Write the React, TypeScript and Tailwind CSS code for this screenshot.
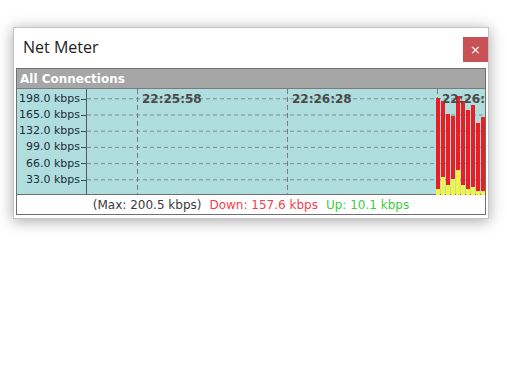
import React from "react";

const yLabels = ["198.0 kbps", "165.0 kbps", "132.0 kbps", "99.0 kbps", "66.0 kbps", "33.0 kbps"];
const gridY = [9.8, 26, 42.2, 58.4, 74.6, 90.8];
const times = [
  { x: 50, label: "22:25:58" },
  { x: 200, label: "22:26:28" },
  { x: 350, label: "22:26:58" },
];
// [down top, up top] in plot coordinates (bottom = 106)
const bars = [
  [9, 100],
  [12, 88],
  [25, 96],
  [27, 90],
  [7, 81],
  [12, 96],
  [21, 100],
  [16, 98],
  [34, 102],
  [28, 102],
];

const Plot = () => (
  <svg width="398" height="106" className="block">
    {gridY.map((y) => (
      <line key={y} x1="0" x2="398" y1={y} y2={y} stroke="#7d8f92" strokeDasharray="4 3" strokeWidth="1" />
    ))}
    {times.map((t) => (
      <line key={t.x} x1={t.x + 0.5} x2={t.x + 0.5} y1="0" y2="106" stroke="#6f7f82" strokeDasharray="5 3" strokeWidth="1" />
    ))}
    {bars.map(([down, up], i) => (
      <g key={i}>
        <rect x={349 + i * 5} y={down} width="4" height={106 - down} fill="#ea1f26" />
        <rect x={349 + i * 5} y={up} width="4" height={106 - up} fill="#f4f43c" />
      </g>
    ))}
    {times.map((t) => (
      <text
        key={t.label}
        x={t.x + 5}
        y="14"
        fill="#4a4a4a"
        fontFamily="'DejaVu Sans', sans-serif"
        fontWeight="bold"
        fontSize="12"
      >
        {t.label}
      </text>
    ))}
  </svg>
);

export default function App() {
  return (
    <div className="w-full h-[371px] bg-white pt-[27px] pl-[13px]">
      <div className="w-[476px] h-[192px] bg-white border border-[#c4c4c4] shadow-[0_2px_14px_rgba(0,0,0,0.35)] flex flex-col">
        {/* Title bar */}
        <div className="h-[40px] flex items-start justify-between">
          <div className="pl-[9px] pt-[7px] text-[16px] text-[#222] font-['Open_Sans',sans-serif]">Net Meter</div>
          <button className="mt-[9px] w-[25px] h-[25px] bg-[#c75155] text-white flex items-center justify-center text-[13px] leading-none font-['DejaVu_Sans',sans-serif]">
            ×
          </button>
        </div>

        {/* Panel */}
        <div className="mx-[2px] border border-[#6f6f6f] flex flex-col font-['DejaVu_Sans',sans-serif]">
          <div className="h-[20px] bg-[#a6a6a6] border-b border-[#7a7a7a] flex items-center pl-[3px] text-white font-bold text-[12px]">
            All Connections
          </div>
          <div className="h-[106px] bg-[#b0dedf] flex border-b border-[#707070]">
            <div className="w-[70px] border-r border-[#4f5f60] pt-[2px] flex flex-col">
              {yLabels.map((l) => (
                <div key={l} className="h-[16.2px] flex items-center justify-end text-[11px] text-[#1d2d3a]">
                  <span>{l}</span>
                  <span className="w-[5px] h-px bg-[#3d4d50] ml-[1px]" />
                </div>
              ))}
            </div>
            <Plot />
          </div>
          <div className="h-[19px] bg-white flex items-center justify-center gap-[8px] text-[12px]">
            <span className="text-[#3a3a3a]">(Max: 200.5 kbps)</span>
            <span className="text-[#f0404d]">Down: 157.6 kbps</span>
            <span className="text-[#3ccc3c]">Up: 10.1 kbps</span>
          </div>
        </div>
      </div>
    </div>
  );
}
